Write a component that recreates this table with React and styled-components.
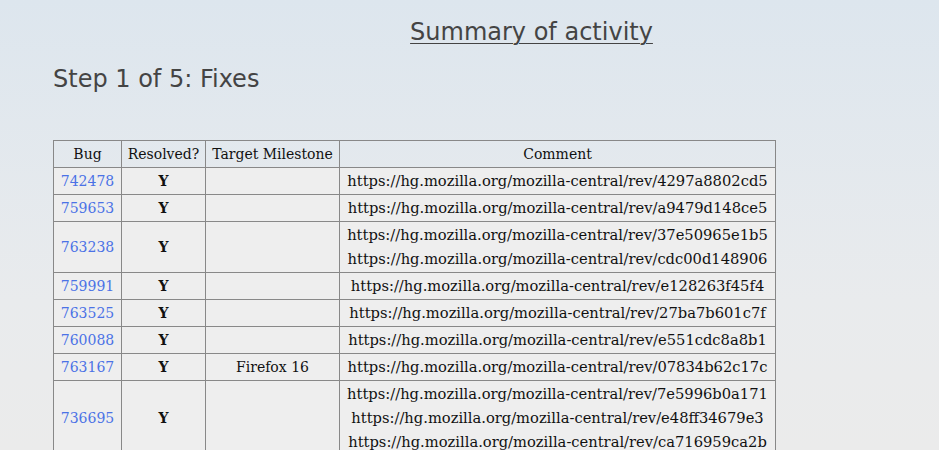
import React from "react";
import styled, { createGlobalStyle } from "styled-components";

const GlobalStyle = createGlobalStyle`
  html, body {
    margin: 0;
    padding: 0;
  }
  body {
    min-height: 450px;
    background: linear-gradient(180deg, #dde6ee 0px, #e9ebed 300px, #ebebeb 450px);
    font-family: "DejaVu Serif", Georgia, serif;
  }
`;

const fixes = [
  { bug: "742478", resolved: "Y", milestone: "", revs: ["4297a8802cd5"] },
  { bug: "759653", resolved: "Y", milestone: "", revs: ["a9479d148ce5"] },
  { bug: "763238", resolved: "Y", milestone: "", revs: ["37e50965e1b5", "cdc00d148906"] },
  { bug: "759991", resolved: "Y", milestone: "", revs: ["e128263f45f4"] },
  { bug: "763525", resolved: "Y", milestone: "", revs: ["27ba7b601c7f"] },
  { bug: "760088", resolved: "Y", milestone: "", revs: ["e551cdc8a8b1"] },
  { bug: "763167", resolved: "Y", milestone: "Firefox 16", revs: ["07834b62c17c"] },
  { bug: "736695", resolved: "Y", milestone: "", revs: ["7e5996b0a171", "e48ff34679e3", "ca716959ca2b"] },
];

const REV_BASE = "https://hg.mozilla.org/mozilla-central/rev/";

const Page = styled.main`
  padding: 0 0 0 53px;
`;

const Title = styled.h1`
  margin: 0 0 0 -53px;
  padding: 15px 0 0 124px;
  text-align: center;
  font-family: "DejaVu Sans", sans-serif;
  font-weight: normal;
  font-size: 24px;
  line-height: 34px;
  color: #444;
  text-decoration: underline;
  text-underline-offset: 3px;
  text-decoration-thickness: 1px;
`;

const StepHeading = styled.h2`
  margin: 13px 0 44px;
  font-family: "DejaVu Sans", sans-serif;
  font-weight: normal;
  font-size: 24px;
  line-height: 34px;
  color: #444;
`;

const Table = styled.table`
  border-collapse: collapse;
  table-layout: fixed;
  width: 723px;
  font-size: 14px;
  color: #111;
`;

const Th = styled.th`
  border: 1px solid #888;
  font-weight: normal;
  padding: 1px 4px;
  height: 24px;
  line-height: 24px;
  width: ${(p) => p.$w}px;
`;

const Td = styled.td`
  border: 1px solid #888;
  background: #eeeeee;
  padding: 1px 4px;
  line-height: 24px;
  text-align: center;
  vertical-align: middle;
  font-weight: ${(p) => (p.$bold ? "bold" : "normal")};
`;

const BugLink = styled.a`
  color: #4b72e6;
  text-decoration: none;
`;

const RevLine = styled.div`
  white-space: nowrap;
  font-size: 14.7px;
`;

const App = () => {
  return (
    <>
      <GlobalStyle />
      <Page>
        <Title>Summary of activity</Title>
        <StepHeading>Step 1 of 5: Fixes</StepHeading>
        <Table>
          <thead>
            <tr>
              <Th $w={59}>Bug</Th>
              <Th $w={75}>Resolved?</Th>
              <Th $w={125}>Target Milestone</Th>
              <Th $w={427}>Comment</Th>
            </tr>
          </thead>
          <tbody>
            {fixes.map((fix) => (
              <tr key={fix.bug}>
                <Td>
                  <BugLink href="#">{fix.bug}</BugLink>
                </Td>
                <Td $bold>{fix.resolved}</Td>
                <Td>{fix.milestone}</Td>
                <Td>
                  {fix.revs.map((rev) => (
                    <RevLine key={rev}>{REV_BASE + rev}</RevLine>
                  ))}
                </Td>
              </tr>
            ))}
          </tbody>
        </Table>
      </Page>
    </>
  );
};

export default App;
